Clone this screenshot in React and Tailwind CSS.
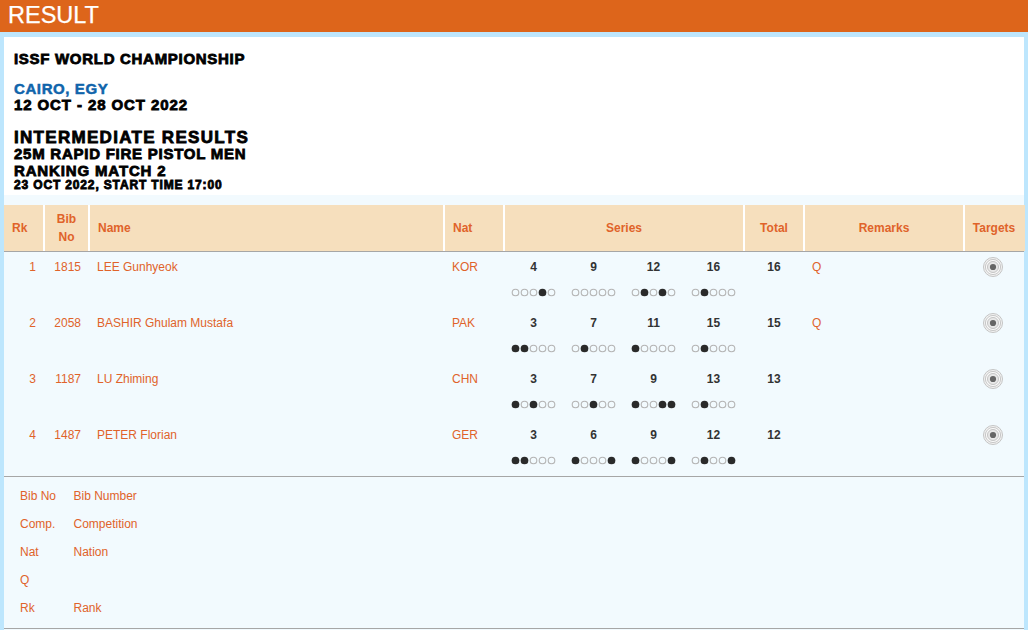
const cols = "grid grid-cols-[39px_2px_43px_2px_353px_2px_58px_2px_238px_2px_58px_2px_158px_2px_60px]";

const rows = [
  { rk: 1, bib: 1815, name: "LEE Gunhyeok", nat: "KOR", total: 16, rem: "Q", s: [[4, "00010"], [9, "00000"], [12, "01010"], [16, "01000"]] },
  { rk: 2, bib: 2058, name: "BASHIR Ghulam Mustafa", nat: "PAK", total: 15, rem: "Q", s: [[3, "11000"], [7, "01000"], [11, "10000"], [15, "01000"]] },
  { rk: 3, bib: 1187, name: "LU Zhiming", nat: "CHN", total: 13, rem: "", s: [[3, "10100"], [7, "00100"], [9, "10011"], [13, "01000"]] },
  { rk: 4, bib: 1487, name: "PETER Florian", nat: "GER", total: 12, rem: "", s: [[3, "11000"], [6, "10001"], [9, "10001"], [12, "01001"]] },
];

const legend = [["Bib No", "Bib Number"], ["Comp.", "Competition"], ["Nat", "Nation"], ["Q", ""], ["Rk", "Rank"]];

function Dots({ v }) {
  return (
    <div className="flex justify-center gap-[2px] h-[7px] pr-[2px]">
      {v.split("").map((d, i) => (
        <span key={i} className={d === "1" ? "w-[7px] h-[7px] rounded-full bg-[#2a2a2a] scale-110" : "w-[7px] h-[7px] rounded-full border border-[#b4b4b4] scale-110"} />
      ))}
    </div>
  );
}

function Target() {
  return (
    <svg width="20" height="20" viewBox="0 0 20 20">
      <circle cx="10" cy="10" r="9.5" fill="#f2f2f2" stroke="#c4c4c4" strokeWidth="1" />
      <circle cx="10" cy="10" r="7.6" fill="#f8f8f8" stroke="#c8c8c8" strokeWidth="1" />
      <circle cx="10" cy="10" r="5.5" fill="#e8e8e8" stroke="#c4c4c4" strokeWidth="1" />
      <circle cx="10" cy="10" r="3.1" fill="#666666" />
    </svg>
  );
}

function Th({ className = "", children }) {
  return <div className={"flex items-center bg-[#f6dfbd] font-bold " + className}>{children}</div>;
}

const sep = <div className="bg-white" />;

export default function App() {
  return (
    <div className="w-[1028px] h-[630px] overflow-hidden bg-[#bde6fd] text-[12px] text-[#e0632a] font-['Liberation_Sans',Arial,sans-serif]">
      <div className="h-[32px] bg-[#dd651b] text-white text-[23.5px] leading-[31px] pl-[8px] [-webkit-text-stroke:0.25px_white]">RESULT</div>
      <div className="mt-[5px] mx-[4px] bg-[#f2fafe] h-[593px]">
        <div className="h-[158px] bg-white pl-[10px] pt-[13px] text-black font-bold [-webkit-text-stroke:0.8px_black]">
          <div className="text-[15px] leading-[17px] tracking-[0.7px]">ISSF WORLD CHAMPIONSHIP</div>
          <div className="mt-[14px] text-[15px] leading-[16px] tracking-[0.6px] text-[#0f64ab] [-webkit-text-stroke:0.5px_#0f64ab]">CAIRO, EGY</div>
          <div className="text-[15px] leading-[15px] tracking-[0.9px]">12 OCT - 28 OCT 2022</div>
          <div className="mt-[16px] text-[17px] leading-[19px] tracking-[1.3px]">INTERMEDIATE RESULTS</div>
          <div className="text-[15px] leading-[14px] tracking-[0.75px]">25M RAPID FIRE PISTOL MEN</div>
          <div className="text-[15px] leading-[19px] tracking-[0.85px]">RANKING MATCH 2</div>
          <div className="text-[12px] leading-[10px] tracking-[0.85px]">23 OCT 2022, START TIME 17:00</div>
        </div>
        <div className={"mt-[10px] h-[47px] border-b border-[#a6a6a6] bg-white " + cols}>
          <Th className="pl-[8px]">Rk</Th>{sep}
          <Th className="justify-center text-center leading-[18px]">Bib<br />No</Th>{sep}
          <Th className="pl-[8px]">Name</Th>{sep}
          <Th className="pl-[8px]">Nat</Th>{sep}
          <Th className="justify-center">Series</Th>{sep}
          <Th className="justify-center">Total</Th>{sep}
          <Th className="justify-center">Remarks</Th>{sep}
          <Th className="justify-center pr-[2px]">Targets</Th>
        </div>
        <div className="h-[225px] border-b border-[#a6a6a6]">
          {rows.map((r) => (
            <div key={r.rk} className={"h-[56px] pt-[8px] leading-[14px] " + cols}>
              <div className="text-right pr-[7px]">{r.rk}</div>
              <div />
              <div className="text-right pr-[7px]">{r.bib}</div>
              <div />
              <div className="pl-[7px]">{r.name}</div>
              <div />
              <div className="pl-[7px]">{r.nat}</div>
              <div />
              <div className="grid grid-cols-[repeat(4,60px)] -ml-[1px] font-bold text-[#333333]">
                {r.s.map(([n, d], i) => (
                  <div key={i} className="flex flex-col items-center gap-[15px]">
                    <div className="pr-[1px]">{n}</div>
                    <Dots v={d} />
                  </div>
                ))}
              </div>
              <div />
              <div className="text-center font-bold text-[#333333]">{r.total}</div>
              <div />
              <div className="pl-[7px]">{r.rem}</div>
              <div />
              <div className="flex justify-center pr-[5px] -mt-[3px] h-[20px]"><Target /></div>
            </div>
          ))}
        </div>
        <div className="pl-[16px] pt-[5px]">
          {legend.map(([a, b]) => (
            <div key={a} className="flex h-[28px] items-center">
              <div className="w-[53.5px]">{a}</div>
              <div>{b}</div>
            </div>
          ))}
        </div>
        <div className="mt-[6px] border-b border-[#a6a6a6]" />
      </div>
    </div>
  );
}
